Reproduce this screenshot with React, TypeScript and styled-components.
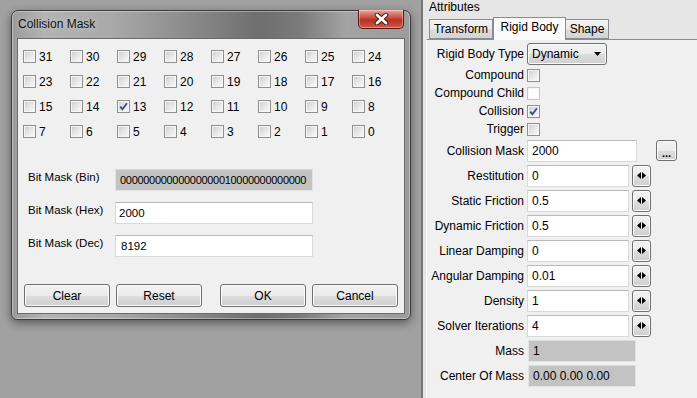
import styled, { createGlobalStyle } from "styled-components";

const GlobalStyle = createGlobalStyle`
  html, body {
    margin: 0;
    padding: 0;
  }
  body {
    font-family: "Liberation Sans", Arial, sans-serif;
    font-size: 11.5px;
    color: #000;
    background: #a0a0a0;
  }
`;

const Screen = styled.div`
  display: flex;
  width: 697px;
  height: 398px;
  overflow: hidden;
`;

const Backdrop = styled.div`
  flex: 0 0 421px;
  box-sizing: border-box;
  padding: 10px 0 0 11px;
  background: #a1a1a1;
`;

const Dialog = styled.div`
  width: 400px;
  height: 310px;
  box-sizing: border-box;
  display: flex;
  flex-direction: column;
  padding: 0 5px 5px 5px;
  border: 1px solid #3c3c3c;
  border-radius: 7px 7px 6px 6px;
  background: linear-gradient(
    90deg,
    #9a9a9a 0%,
    #b3b3b3 8%,
    #a9a9a9 25%,
    #8a8a8a 45%,
    #6e6e6e 62%,
    #7a7a7a 72%,
    #a3a3a3 84%,
    #9c9c9c 100%
  );
  box-shadow: 0 3px 10px rgba(0, 0, 0, 0.45),
    inset 0 0 0 1px rgba(255, 255, 255, 0.35);
`;

const TitleBar = styled.div`
  height: 27px;
  display: flex;
  justify-content: space-between;
  align-items: flex-start;
`;

const Title = styled.div`
  padding: 6px 0 0 1px;
  font-size: 12px;
  line-height: 14px;
  color: #111;
  text-shadow: 0 0 6px rgba(255, 255, 255, 0.55);
`;

const CloseButton = styled.div`
  width: 46px;
  height: 19px;
  margin: -1px 1px 0 0;
  box-sizing: border-box;
  border: 1px solid #5a1711;
  border-top: none;
  border-radius: 0 0 5px 5px;
  background: linear-gradient(#e4a79c 0%, #cf5646 40%, #b8301f 55%, #cf5b48 100%);
  box-shadow: inset 0 0 0 1px rgba(255, 255, 255, 0.35);
  display: flex;
  align-items: center;
  justify-content: center;
`;

const Client = styled.div`
  flex: 1;
  background: #f0f0f0;
  border: 1px solid #6c6c6c;
  display: flex;
  flex-direction: column;
  padding: 5px 0 0 5px;
`;

const BitGrid = styled.div`
  display: grid;
  grid-template-columns: repeat(8, 47px);
  grid-auto-rows: 25px;
  font-size: 12px;
`;

const BitCell = styled.label`
  display: flex;
  align-items: center;
  gap: 3px;
`;

const Box = styled.span<{ $disabled?: boolean }>`
  flex: none;
  width: 13px;
  height: 13px;
  box-sizing: border-box;
  border: 1px solid ${(p) => (p.$disabled ? "#c6c6c6" : "#8e8f8f")};
  background: ${(p) =>
    p.$disabled ? "#fdfdfd" : "linear-gradient(135deg, #c9ccd1 0%, #e9e9e9 55%, #fbfbfb 100%)"};
  box-shadow: inset 0 0 0 1px #f6f6f6;
  display: flex;
  align-items: center;
  justify-content: center;
`;

const MaskForm = styled.div`
  margin-top: 25px;
  padding-left: 5px;
  display: grid;
  grid-template-columns: 87px 198px;
  row-gap: 11px;
`;

const MaskLabel = styled.div`
  padding-top: 1px;
  line-height: 14px;
  white-space: nowrap;
`;

const MaskField = styled.div<{ $readonly?: boolean; $pad: number }>`
  height: 22px;
  box-sizing: border-box;
  display: flex;
  align-items: center;
  overflow: hidden;
  white-space: nowrap;
  padding-left: ${(p) => p.$pad}px;
  border: 1px solid ${(p) => (p.$readonly ? "#e2e2e2" : "#d9d9d9")};
  border-top-color: ${(p) => (p.$readonly ? "#d8d8d8" : "#b9b9b9")};
  background: ${(p) => (p.$readonly ? "#c3c3c3" : "#ffffff")};
  font-size: ${(p) => (p.$readonly ? "11px" : "11.5px")};
  letter-spacing: ${(p) => (p.$readonly ? "-0.3px" : "0")};
`;

const ButtonRow = styled.div`
  margin-top: 27px;
  padding-left: 1px;
  display: flex;
  gap: 6px;
`;

const PushButton = styled.div<{ $gapBefore?: boolean }>`
  width: 86px;
  height: 23px;
  box-sizing: border-box;
  margin-left: ${(p) => (p.$gapBefore ? "12px" : "0")};
  border: 1px solid #707070;
  border-radius: 3px;
  background: linear-gradient(#f2f2f2 0%, #ebebeb 50%, #dddddd 51%, #cfcfcf 100%);
  box-shadow: inset 0 0 0 1px #fbfbfb;
  display: flex;
  align-items: center;
  justify-content: center;
  font-size: 12px;
`;

const Panel = styled.div`
  flex: 1;
  display: flex;
  flex-direction: column;
  border-left: 2px solid #777777;
  padding-left: 3px;
  background: #e6e6e6;
`;

const PanelHeader = styled.div`
  height: 16px;
  padding-left: 3px;
  line-height: 15px;
  font-size: 12px;
`;

const TabBar = styled.div`
  height: 23px;
  padding-left: 4px;
  display: flex;
  align-items: flex-end;
`;

const Tab = styled.div<{ $active?: boolean; $w: number }>`
  width: ${(p) => p.$w}px;
  height: ${(p) => (p.$active ? 23 : 20)}px;
  box-sizing: border-box;
  margin-bottom: ${(p) => (p.$active ? "-1px" : "0")};
  margin-left: ${(p) => (p.$active ? "0" : "-1px")};
  position: relative;
  z-index: ${(p) => (p.$active ? 1 : 0)};
  border: 1px solid #898c95;
  border-bottom: ${(p) => (p.$active ? "none" : "1px solid #898c95")};
  background: ${(p) =>
    p.$active ? "#fbfbfb" : "linear-gradient(#f2f2f2 0%, #ebebeb 50%, #dddddd 51%, #d4d4d4 100%)"};
  display: flex;
  align-items: ${(p) => (p.$active ? "flex-start" : "center")};
  padding-top: ${(p) => (p.$active ? "2px" : "0")};
  justify-content: center;
  font-size: 12px;
`;

const Pane = styled.div`
  flex: 1;
  background: #f0f0f0;
  border-top: 1px solid #898c95;
  border-left: 1px solid #ffffff;
  padding-top: 2px;
  display: flex;
  flex-direction: column;
`;

const Row = styled.div<{ $h: number }>`
  height: ${(p) => p.$h}px;
  display: grid;
  grid-template-columns: 97px auto;
  column-gap: 3px;
  align-items: center;
`;

const RowLabel = styled.div`
  text-align: right;
  white-space: nowrap;
  font-size: 12px;
`;

const Controls = styled.div<{ $gap: number }>`
  display: flex;
  align-items: center;
  gap: ${(p) => p.$gap}px;
`;

const Combo = styled.div`
  width: 80px;
  height: 22px;
  box-sizing: border-box;
  padding: 0 5px 0 4px;
  border: 1px solid #707070;
  border-radius: 3px;
  background: linear-gradient(#f2f2f2 0%, #ebebeb 50%, #dddddd 51%, #cfcfcf 100%);
  box-shadow: inset 0 0 0 1px #fbfbfb;
  display: flex;
  align-items: center;
  justify-content: space-between;
  font-size: 12px;
`;

const Input = styled.div<{ $w: number; $readonly?: boolean }>`
  width: ${(p) => p.$w}px;
  height: 22px;
  box-sizing: border-box;
  margin-left: ${(p) => (p.$readonly ? "1px" : "0")};
  padding-left: 4px;
  border: 1px solid ${(p) => (p.$readonly ? "#e4e4e4" : "#d9d9d9")};
  border-top-color: ${(p) => (p.$readonly ? "#dadada" : "#b9b9b9")};
  background: ${(p) => (p.$readonly ? "#c3c3c3" : "#ffffff")};
  display: flex;
  align-items: center;
  font-size: 12px;
  white-space: nowrap;
`;

const SmallButton = styled.div<{ $w: number; $h: number }>`
  width: ${(p) => p.$w}px;
  height: ${(p) => p.$h}px;
  box-sizing: border-box;
  border: 1px solid #707070;
  border-radius: 3px;
  background: linear-gradient(#f2f2f2 0%, #ebebeb 50%, #dddddd 51%, #cfcfcf 100%);
  box-shadow: inset 0 0 0 1px #fbfbfb;
  display: flex;
  align-items: center;
  justify-content: center;
  font-weight: bold;
  font-size: 11px;
  line-height: 1;
`;

const Check = ({ checked, disabled }: { checked?: boolean; disabled?: boolean }) => (
  <Box $disabled={disabled}>
    {checked && (
      <svg width="9" height="9" viewBox="0 0 9 9">
        <path d="M1.2 4.6 L3.4 7.2 L7.9 1.2" fill="none" stroke="#3c4f8c" strokeWidth="1.8" />
      </svg>
    )}
  </Box>
);

const Spinner = () => (
  <SmallButton $w={19} $h={22}>
    <svg width="9" height="7" viewBox="0 0 9 7">
      <polygon points="0,3.5 4,0 4,7" fill="#000" />
      <polygon points="5,0 9,3.5 5,7" fill="#000" />
    </svg>
  </SmallButton>
);

type Field =
  | { kind: "combo"; label: string; value: string }
  | { kind: "check"; label: string; checked?: boolean; disabled?: boolean }
  | { kind: "mask"; label: string; value: string }
  | { kind: "spin"; label: string; value: string }
  | { kind: "readonly"; label: string; value: string };

const fields: Field[] = [
  { kind: "combo", label: "Rigid Body Type", value: "Dynamic" },
  { kind: "check", label: "Compound" },
  { kind: "check", label: "Compound Child", disabled: true },
  { kind: "check", label: "Collision", checked: true },
  { kind: "check", label: "Trigger" },
  { kind: "mask", label: "Collision Mask", value: "2000" },
  { kind: "spin", label: "Restitution", value: "0" },
  { kind: "spin", label: "Static Friction", value: "0.5" },
  { kind: "spin", label: "Dynamic Friction", value: "0.5" },
  { kind: "spin", label: "Linear Damping", value: "0" },
  { kind: "spin", label: "Angular Damping", value: "0.01" },
  { kind: "spin", label: "Density", value: "1" },
  { kind: "spin", label: "Solver Iterations", value: "4" },
  { kind: "readonly", label: "Mass", value: "1" },
  { kind: "readonly", label: "Center Of Mass", value: "0.00 0.00 0.00" },
];

const rowHeight = (kind: Field["kind"]) =>
  kind === "combo" ? 24 : kind === "check" ? 18 : 25;

function FieldControl({ field }: { field: Field }) {
  switch (field.kind) {
    case "combo":
      return (
        <Combo>
          <span>{field.value}</span>
          <svg width="7" height="4" viewBox="0 0 7 4">
            <polygon points="0,0 7,0 3.5,4" fill="#000" />
          </svg>
        </Combo>
      );
    case "check":
      return <Check checked={field.checked} disabled={field.disabled} />;
    case "mask":
      return (
        <Controls $gap={19}>
          <Input $w={110}>{field.value}</Input>
          <SmallButton $w={21} $h={21}>
            <span style={{ marginTop: 5 }}>...</span>
          </SmallButton>
        </Controls>
      );
    case "spin":
      return (
        <Controls $gap={3}>
          <Input $w={102}>{field.value}</Input>
          <Spinner />
        </Controls>
      );
    case "readonly":
      return <Input $w={108} $readonly>{field.value}</Input>;
  }
}

const MASK = 0x2000;
const bits = Array.from({ length: 32 }, (_, i) => 31 - i);

export default function App() {
  const bin = MASK.toString(2).padStart(32, "0");
  return (
    <Screen>
      <GlobalStyle />
      <Backdrop>
        <Dialog>
          <TitleBar>
            <Title>Collision Mask</Title>
            <CloseButton>
              <svg width="15" height="12" viewBox="0 0 15 12">
                <path d="M3 2 L12 10 M12 2 L3 10" stroke="#4a1510" strokeWidth="4.6" strokeLinecap="round" />
                <path d="M3 2 L12 10 M12 2 L3 10" stroke="#ffffff" strokeWidth="2.8" strokeLinecap="round" />
              </svg>
            </CloseButton>
          </TitleBar>
          <Client>
            <BitGrid>
              {bits.map((b) => (
                <BitCell key={b}>
                  <Check checked={(MASK >> b) & 1 ? true : false} />
                  <span>{b}</span>
                </BitCell>
              ))}
            </BitGrid>
            <MaskForm>
              <MaskLabel>Bit Mask (Bin)</MaskLabel>
              <MaskField $readonly $pad={4}>{bin}</MaskField>
              <MaskLabel>Bit Mask (Hex)</MaskLabel>
              <MaskField $pad={3}>{MASK.toString(16)}</MaskField>
              <MaskLabel>Bit Mask (Dec)</MaskLabel>
              <MaskField $pad={5}>{MASK}</MaskField>
            </MaskForm>
            <ButtonRow>
              <PushButton>Clear</PushButton>
              <PushButton>Reset</PushButton>
              <PushButton $gapBefore>OK</PushButton>
              <PushButton>Cancel</PushButton>
            </ButtonRow>
          </Client>
        </Dialog>
      </Backdrop>
      <Panel>
        <PanelHeader>Attributes</PanelHeader>
        <TabBar>
          <Tab $w={64}>Transform</Tab>
          <Tab $w={73} $active>Rigid Body</Tab>
          <Tab $w={44}>Shape</Tab>
        </TabBar>
        <Pane>
          {fields.map((f) => (
            <Row key={f.label} $h={rowHeight(f.kind)}>
              <RowLabel>{f.label}</RowLabel>
              <div>
                <FieldControl field={f} />
              </div>
            </Row>
          ))}
        </Pane>
      </Panel>
    </Screen>
  );
}
